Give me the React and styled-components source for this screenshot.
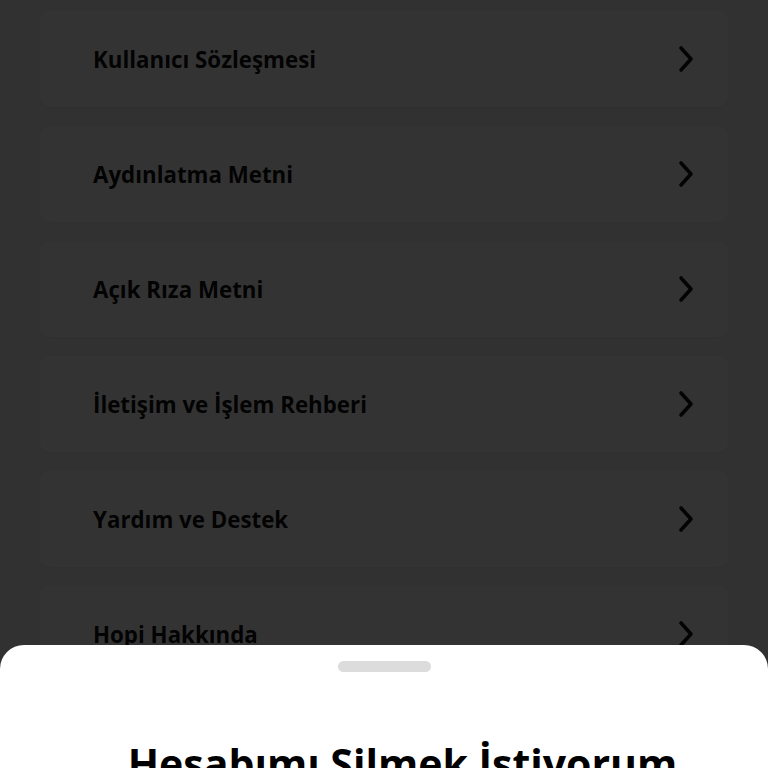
import React from "react";
import styled, { createGlobalStyle } from "styled-components";

const Global = createGlobalStyle`
  html, body { margin: 0; padding: 0; height: 100%; overflow: hidden; }
  body { background: #f6f6f6; font-family: "Open Sans", "Noto Sans", sans-serif; }
`;

const Page = styled.div`
  display: flex;
  flex-direction: column;
  gap: 19px;
  padding: 11px 40px 0;
`;

const Card = styled.div`
  flex-shrink: 0;
  height: 96px;
  background: #ffffff;
  border-radius: 10px;
  box-shadow: 0 1px 4px rgba(0, 0, 0, 0.05);
  display: flex;
  align-items: center;
  justify-content: space-between;
  padding: 0 34px 0 53px;
`;

const Label = styled.span`
  font-family: "Open Sans", sans-serif;
  font-weight: 700;
  font-size: 22.3px;
  color: #111111;
`;

const Overlay = styled.div`
  position: fixed;
  inset: 0;
  background: rgba(0, 0, 0, 0.8);
`;

const Sheet = styled.div`
  position: fixed;
  left: 0;
  right: 0;
  top: 645px;
  bottom: 0;
  background: #ffffff;
  border-radius: 24px 24px 0 0;
  display: flex;
  flex-direction: column;
  align-items: center;
  padding-top: 16px;
  overflow: hidden;
`;

const Handle = styled.div`
  flex-shrink: 0;
  width: 93px;
  height: 11px;
  border-radius: 6px;
  background: #dcdcdc;
`;

const Title = styled.h2`
  flex-shrink: 0;
  margin: 67px 0 0;
  padding-left: 37px;
  font-family: "Open Sans", sans-serif;
  font-weight: 700;
  font-size: 41px;
  line-height: 1.2;
  color: #000;
  text-align: center;
  white-space: nowrap;
`;

const Chevron = () => (
  <svg width="16" height="28" viewBox="0 0 16 28" fill="none">
    <path d="M3 3 L13 14 L3 25" stroke="#111111" strokeWidth="3.6" strokeLinecap="round" strokeLinejoin="round" />
  </svg>
);

const items = [
  "Kullanıcı Sözleşmesi",
  "Aydınlatma Metni",
  "Açık Rıza Metni",
  "İletişim ve İşlem Rehberi",
  "Yardım ve Destek",
  "Hopi Hakkında",
  "Çıkış Yap",
];

export default function App() {
  return (
    <>
      <Global />
      <Page>
        {items.map((t) => (
          <Card key={t}>
            <Label>{t}</Label>
            <Chevron />
          </Card>
        ))}
      </Page>
      <Overlay />
      <Sheet>
        <Handle />
        <Title>Hesabımı Silmek İstiyorum</Title>
      </Sheet>
    </>
  );
}
